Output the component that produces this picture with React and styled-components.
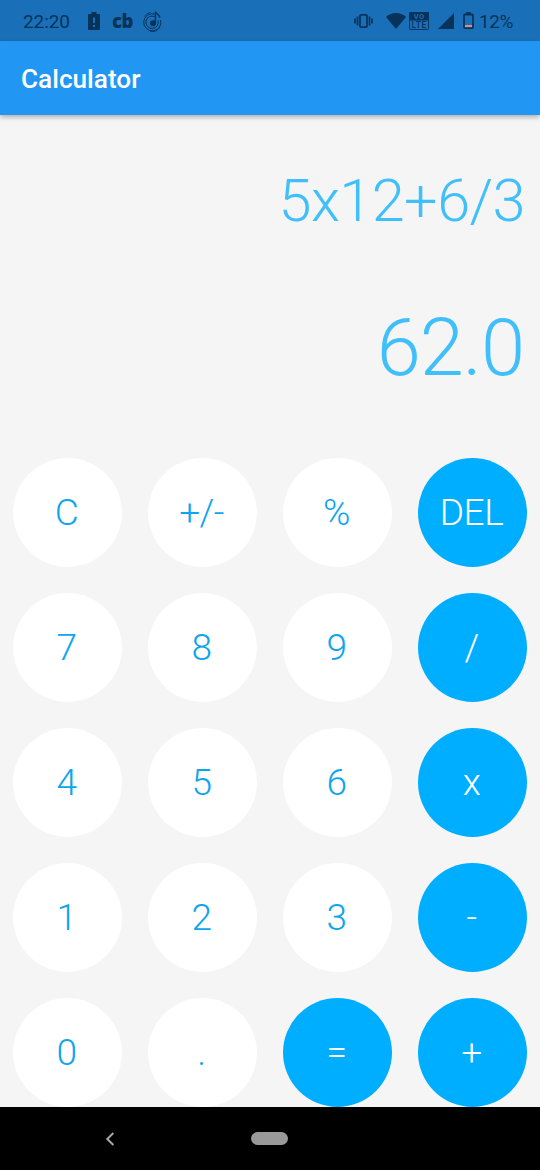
import React from "react";
import styled, { createGlobalStyle } from "styled-components";

const GlobalStyle = createGlobalStyle`
  * { box-sizing: border-box; }
  body { margin: 0; background: #000; font-family: Roboto, "Liberation Sans", sans-serif; }
`;

const Screen = styled.div`
  width: 540px;
  height: 1170px;
  display: flex;
  flex-direction: column;
  overflow: hidden;
  background: #f5f5f5;
`;

const StatusBar = styled.header`
  flex: none;
  height: 41px;
  display: flex;
  align-items: center;
  justify-content: space-between;
  padding: 0 27px 0 23px;
  background: #1a70b8;
  color: #07325a;
  font-size: 19px;
  line-height: 41px;

  svg { display: block; flex: none; }
`;

const StatusGroup = styled.div`
  display: flex;
  align-items: center;
  height: 41px;
`;

const Clock = styled.span`
  width: 65px;
  letter-spacing: -0.1px;
  padding-top: 2px;
`;

const Brand = styled.span`
  width: 30px;
  font-family: "Open Sans", sans-serif;
  font-weight: 800;
  font-size: 18.5px;
  letter-spacing: -0.5px;
`;

const Percent = styled.span`
  width: 34px;
  margin-left: 5px;
  padding-top: 2px;
  letter-spacing: -0.4px;
`;

const AppBar = styled.div`
  flex: none;
  height: 74px;
  display: flex;
  align-items: center;
  padding: 1px 21px 0;
  background: #2196f3;
  color: #fff;
  font-size: 26.2px;
  font-weight: 500;
  box-shadow: 0 2px 5px rgba(0, 0, 0, 0.3);
`;

const Display = styled.section`
  flex: none;
  height: 330px;
  display: flex;
  flex-direction: column;
  align-items: flex-end;
  padding: 51px 15px 0 0;
  color: #40bffb;
  font-weight: 300;
`;

const Expression = styled.div`
  font-size: 59.5px;
  line-height: 70px;
  letter-spacing: -0.6px;
`;

const Result = styled.div`
  margin-top: 65px;
  padding-right: 1px;
  font-size: 79.5px;
  line-height: 94px;
  letter-spacing: -1px;
`;

const Keypad = styled.main`
  flex: none;
  height: 662px;
  display: grid;
  grid-template-columns: repeat(4, 135px);
  grid-auto-rows: 135px;
  justify-items: center;
  padding-top: 13px;
`;

const Key = styled.button`
  width: 109px;
  height: 109px;
  padding: 0 2px 0 0;
  border: 0;
  border-radius: 50%;
  background: ${({ $accent }) => ($accent ? "#00aeff" : "#fff")};
  color: ${({ $accent }) => ($accent ? "#fff" : "#0da5ee")};
  font-family: inherit;
  font-size: 37px;
  font-weight: 300;
  line-height: 109px;
  letter-spacing: -0.5px;
`;

const NavBar = styled.nav`
  flex: none;
  height: 63px;
  display: flex;
  align-items: center;
  padding-left: 105px;
  background: #000;
`;

const HomePill = styled.span`
  width: 37px;
  height: 13px;
  margin-left: 136px;
  border-radius: 7px;
  background: #999;
`;

const BatteryAlert = () => (
  <svg width="12" height="18" viewBox="0 0 12 18">
    <path fill="currentColor" fillRule="evenodd" d="M3.5 0h5v2H11a1 1 0 0 1 1 1v14a1 1 0 0 1-1 1H1a1 1 0 0 1-1-1V3a1 1 0 0 1 1-1h2.5zM5 5.5v5.5h2V5.5zM5 13v2h2v-2z" />
  </svg>
);

const MusicDisc = () => (
  <svg width="21" height="22" viewBox="0 0 21 22" fill="none" stroke="currentColor" strokeWidth="1">
    <path d="M12.5 4A8.6 8.6 0 1 0 18.6 10M12.6 6.6A6.2 6.2 0 1 0 16 10.5" />
    <path d="M2.5 6.2A10 10 0 0 1 8.5 2.3M18 17A9.8 9.8 0 0 1 8 21.3" strokeWidth="0.9" />
    <circle cx="11" cy="13.2" r="3" fill="currentColor" stroke="none" />
    <path d="M13.4 13.2V1.5c.2 2.5 4.5 2.7 4.4 6.5" strokeWidth="1.4" />
  </svg>
);

const Vibrate = () => (
  <svg width="19" height="14" viewBox="0 0 19 14" fill="none" stroke="currentColor" strokeWidth="1.7">
    <rect x="6" y="0.9" width="7" height="12.2" rx="0.8" />
    <path d="M3.5 2.5v9M15.5 2.5v9M1 4.5v5M18 4.5v5" />
  </svg>
);

const Wifi = () => (
  <svg width="20" height="16" viewBox="0 0 20 16">
    <path fill="currentColor" d="M0 4C5.5-1.2 14.5-1.2 20 4L10 16z" />
  </svg>
);

const VoLte = () => (
  <svg width="20" height="18" viewBox="0 0 20 18" fontFamily="Roboto, sans-serif" fontWeight="700" textAnchor="middle">
    <rect x="0.5" y="0.5" width="19" height="17" rx="0.8" fill="none" stroke="currentColor" />
    <rect width="20" height="8.5" rx="1" fill="currentColor" />
    <text x="10.2" y="7.2" fontSize="7.5" fill="#1a70b8" letterSpacing="0.5">VO</text>
    <text x="10.2" y="16.2" fontSize="8.5" fontWeight="500" fill="currentColor" letterSpacing="0.6">LTE</text>
  </svg>
);

const Signal = () => (
  <svg width="16" height="16" viewBox="0 0 16 16">
    <path fill="currentColor" d="M16 0v16H0z" />
  </svg>
);

const BatteryLow = () => (
  <svg width="11" height="17" viewBox="0 0 11 17">
    <rect x="1" y="2.5" width="9" height="13.5" rx="0.8" fill="none" stroke="currentColor" strokeWidth="1.8" />
    <path fill="currentColor" d="M3.3 0h4.4v2H3.3z" />
    <path fill="#dc8e80" d="M2 13h7v2.2H2z" />
  </svg>
);

const BackArrow = () => (
  <svg width="10" height="14" viewBox="0 0 10 14" fill="none" stroke="#a6a6a6" strokeWidth="2">
    <path d="M8.4 1L2.3 7l6.1 6" />
  </svg>
);

const Gap = styled.span`
  flex: none;
  width: ${({ $w }) => $w}px;
`;

const KEYS = [
  ["C"], ["+/-"], ["%"], ["DEL", true],
  ["7"], ["8"], ["9"], ["/", true],
  ["4"], ["5"], ["6"], ["x", true],
  ["1"], ["2"], ["3"], ["-", true],
  ["0"], ["."], ["=", true], ["+", true],
];

export default function App() {
  return (
    <>
      <GlobalStyle />
      <Screen>
        <StatusBar>
          <StatusGroup>
            <Clock>22:20</Clock>
            <BatteryAlert />
            <Gap $w={12} />
            <Brand>cb</Brand>
            <MusicDisc />
          </StatusGroup>
          <StatusGroup>
            <Vibrate />
            <Gap $w={13} />
            <Wifi />
            <Gap $w={3} />
            <VoLte />
            <Gap $w={9} />
            <Signal />
            <Gap $w={9} />
            <BatteryLow />
            <Percent>12%</Percent>
          </StatusGroup>
        </StatusBar>
        <AppBar>Calculator</AppBar>
        <Display>
          <Expression>5x12+6/3</Expression>
          <Result>62.0</Result>
        </Display>
        <Keypad>
          {KEYS.map(([label, accent]) => (
            <Key key={label} $accent={accent}>{label}</Key>
          ))}
        </Keypad>
        <NavBar>
          <BackArrow />
          <HomePill />
        </NavBar>
      </Screen>
    </>
  );
}
